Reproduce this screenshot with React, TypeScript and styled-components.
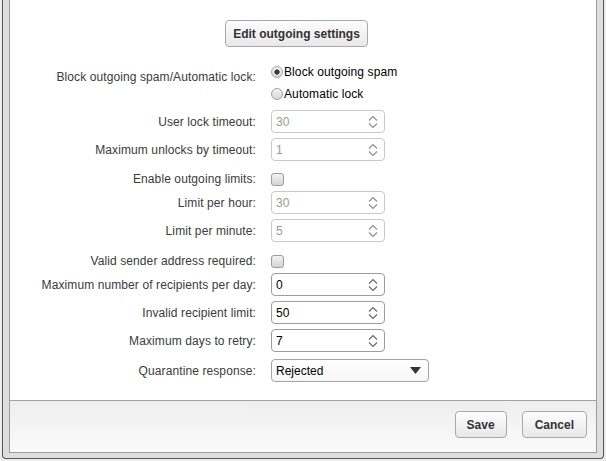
import styled, { createGlobalStyle } from "styled-components";

const GlobalStyle = createGlobalStyle`
  html, body {
    margin: 0;
    padding: 0;
    background: #ededed;
  }
  body {
    font-family: "Liberation Sans", Arial, sans-serif;
    font-size: 12px;
    color: #333;
  }
`;

const Frame = styled.div`
  box-sizing: border-box;
  width: 602px;
  height: 459px;
  margin-left: 2px;
  padding: 0 6px 5px;
  background: #dedede;
  border: 1px solid #555;
  border-top: none;
  border-radius: 0 0 4px 4px;
`;

const Panel = styled.div`
  box-sizing: border-box;
  height: 100%;
  display: flex;
  flex-direction: column;
  background: #fff;
  border: 1px solid #9c9c9c;
  border-top: none;
`;

const Content = styled.div`
  flex: 1;
  padding-top: 20px;
`;

const ButtonBar = styled.div`
  display: flex;
  justify-content: center;
  padding-right: 13px;
`;

const Button = styled.button<{ $pad?: number }>`
  box-sizing: border-box;
  height: 27px;
  padding: 0 ${p => p.$pad ?? 10}px;
  font-family: "Liberation Sans", Arial, sans-serif;
  font-size: 12px;
  font-weight: bold;
  color: #333;
  background: linear-gradient(#fdfdfd, #e8e8e8);
  border: 1px solid #a9a9a9;
  border-radius: 4px;
  cursor: pointer;
`;

const Form = styled.div`
  display: flex;
  flex-direction: column;
  gap: 5px;
  margin-top: 14px;
`;

const Row = styled.div<{ $top?: number; $start?: boolean }>`
  display: grid;
  grid-template-columns: 246px auto;
  column-gap: 15px;
  align-items: ${p => (p.$start ? "start" : "center")};
  margin-top: ${p => p.$top ?? 0}px;
`;

const CheckRow = styled(Row)<{ $pt?: number }>`
  padding-top: ${p => p.$pt ?? 6}px;
`;

const Label = styled.div<{ $pt?: number }>`
  text-align: right;
  white-space: nowrap;
  line-height: 14px;
  letter-spacing: 0.1px;
  color: #3a3a3a;
  padding-top: ${p => p.$pt ?? 0}px;
`;

const RadioGroup = styled.div`
  display: flex;
  flex-direction: column;
`;

const RadioLine = styled.label`
  display: flex;
  align-items: center;
  height: 22px;
  color: #000;
  gap: 1px;
  letter-spacing: 0.1px;
`;

const RadioDot = styled.span<{ $checked?: boolean }>`
  box-sizing: border-box;
  width: 12px;
  height: 12px;
  border-radius: 50%;
  border: 1px solid #a3a3a3;
  background: ${p =>
    p.$checked
      ? "radial-gradient(circle, #3c3c3c 0 2.4px, transparent 2.8px), linear-gradient(#f4f4f4, #d6d6d6)"
      : "linear-gradient(#f4f4f4, #d6d6d6)"};
`;

const CheckBox = styled.span`
  box-sizing: border-box;
  width: 13px;
  height: 13px;
  border: 1px solid #9c9c9c;
  border-radius: 3px;
  background: linear-gradient(#f2f2f2, #d4d4d4);
`;

const SpinBox = styled.div<{ $disabled?: boolean }>`
  box-sizing: border-box;
  width: 114px;
  height: 23px;
  display: flex;
  align-items: center;
  padding: 0 6px 0 4px;
  border: 1px solid ${p => (p.$disabled ? "#c9c9c9" : "#9d9d9d")};
  border-radius: 4px;
  background: #fff;
`;

const SpinValue = styled.input<{ $disabled?: boolean }>`
  flex: 1;
  min-width: 0;
  border: none;
  outline: none;
  padding: 0;
  background: transparent;
  font-family: "Liberation Sans", Arial, sans-serif;
  font-size: 12px;
  color: ${p => (p.$disabled ? "#9a9a9a" : "#000")};
`;

const SelectBox = styled.div`
  box-sizing: border-box;
  width: 158px;
  height: 23px;
  display: flex;
  align-items: center;
  justify-content: space-between;
  padding: 0 7px 0 4px;
  border: 1px solid #a3a3a3;
  border-radius: 4px;
  background: linear-gradient(#ffffff, #f6f6f6);
  color: #000;
`;

const Footer = styled.div`
  box-sizing: border-box;
  height: 52px;
  display: flex;
  justify-content: flex-end;
  align-items: flex-start;
  gap: 15px;
  padding: 10px 9px 0 0;
  border-top: 1px solid #a2a2a2;
  background: linear-gradient(#eeeeee, #fbfbfb);
`;

function Spinner({ disabled }: { disabled?: boolean }) {
  const c = disabled ? "#8c8c8c" : "#666";
  return (
    <svg width="10" height="14" viewBox="0 0 10 14">
      <path d="M1 5.5 L5 1.5 L9 5.5" fill="none" stroke={c} strokeWidth="1.1" />
      <path d="M1 8.5 L5 12.5 L9 8.5" fill="none" stroke={c} strokeWidth="1.1" />
    </svg>
  );
}

function Spin({ value, disabled }: { value: string; disabled?: boolean }) {
  return (
    <SpinBox $disabled={disabled}>
      <SpinValue $disabled={disabled} value={value} readOnly disabled={disabled} />
      <Spinner disabled={disabled} />
    </SpinBox>
  );
}

export default function App() {
  return (
    <>
      <GlobalStyle />
      <Frame>
        <Panel>
          <Content>
            <ButtonBar>
              <Button $pad={7}>Edit outgoing settings</Button>
            </ButtonBar>

            <Form>
              <Row $start>
                <Label $pt={9}>Block outgoing spam/Automatic lock:</Label>
                <RadioGroup>
                  <RadioLine>
                    <RadioDot $checked />
                    Block outgoing spam
                  </RadioLine>
                  <RadioLine>
                    <RadioDot />
                    Automatic lock
                  </RadioLine>
                </RadioGroup>
              </Row>

              <Row>
                <Label>User lock timeout:</Label>
                <Spin value="30" disabled />
              </Row>
              <Row>
                <Label>Maximum unlocks by timeout:</Label>
                <Spin value="1" disabled />
              </Row>
              <CheckRow>
                <Label>Enable outgoing limits:</Label>
                <CheckBox />
              </CheckRow>
              <Row>
                <Label>Limit per hour:</Label>
                <Spin value="30" disabled />
              </Row>
              <Row>
                <Label>Limit per minute:</Label>
                <Spin value="5" disabled />
              </Row>
              <CheckRow $pt={7}>
                <Label>Valid sender address required:</Label>
                <CheckBox />
              </CheckRow>
              <Row>
                <Label>Maximum number of recipients per day:</Label>
                <Spin value="0" />
              </Row>
              <Row>
                <Label>Invalid recipient limit:</Label>
                <Spin value="50" />
              </Row>
              <Row>
                <Label>Maximum days to retry:</Label>
                <Spin value="7" />
              </Row>
              <Row $top={2}>
                <Label>Quarantine response:</Label>
                <SelectBox>
                  Rejected
                  <svg width="11" height="7" viewBox="0 0 11 7">
                    <path d="M0 0 L11 0 L5.5 7 Z" fill="#333" />
                  </svg>
                </SelectBox>
              </Row>
            </Form>
          </Content>

          <Footer>
            <Button $pad={11}>Save</Button>
            <Button $pad={12}>Cancel</Button>
          </Footer>
        </Panel>
      </Frame>
    </>
  );
}
